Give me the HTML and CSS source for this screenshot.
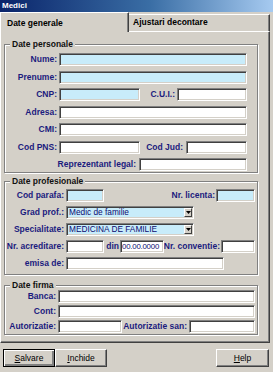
FILE: index.html
```html
<!DOCTYPE html>
<html lang="ro">
<head>
    <meta charset="UTF-8">
    <meta name="viewport" content="width=device-width, initial-scale=1.0">
    <title>Medici</title>
    <link rel="stylesheet" href="styles.css">
</head>
<body>
    <div class="window">
        <div class="titlebar">Medici</div>

        <div class="tabs">
            <div class="tab active">Date generale</div>
            <div class="tab">Ajustari decontare</div>
        </div>

        <div class="panel">
            <fieldset class="group personale">
                <legend>Date personale</legend>
                <div class="rows">
                    <div class="row">
                        <label class="lbl p-lbl">Nume:</label>
                        <div class="field blue p-full"></div>
                    </div>
                    <div class="row">
                        <label class="lbl p-lbl">Prenume:</label>
                        <div class="field blue p-full"></div>
                    </div>
                    <div class="row">
                        <label class="lbl p-lbl">CNP:</label>
                        <div class="field blue p-half"></div>
                        <label class="lbl cui-lbl">C.U.I.:</label>
                        <div class="field cui"></div>
                    </div>
                    <div class="row">
                        <label class="lbl p-lbl">Adresa:</label>
                        <div class="field p-full"></div>
                    </div>
                    <div class="row">
                        <label class="lbl p-lbl">CMI:</label>
                        <div class="field p-full"></div>
                    </div>
                    <div class="row">
                        <label class="lbl p-lbl">Cod PNS:</label>
                        <div class="field p-half"></div>
                        <label class="lbl jud-lbl">Cod Jud:</label>
                        <div class="field jud"></div>
                    </div>
                    <div class="row">
                        <label class="lbl repr-lbl">Reprezentant legal:</label>
                        <div class="field repr"></div>
                    </div>
                </div>
            </fieldset>

            <fieldset class="group profesionale">
                <legend>Date profesionale</legend>
                <div class="rows">
                    <div class="row">
                        <label class="lbl d-lbl">Cod parafa:</label>
                        <div class="field blue short"></div>
                        <label class="lbl lic-lbl">Nr. licenta:</label>
                        <div class="field blue lic"></div>
                    </div>
                    <div class="row">
                        <label class="lbl d-lbl">Grad prof.:</label>
                        <div class="field blue select">
                            <span class="value">Medic de familie</span>
                            <span class="arrow"><svg width="5" height="3" viewBox="0 0 5 3"><polygon points="0,0 5,0 2.5,3" fill="#000"/></svg></span>
                        </div>
                    </div>
                    <div class="row">
                        <label class="lbl d-lbl">Specialitate:</label>
                        <div class="field blue select">
                            <span class="value">MEDICINA DE FAMILIE</span>
                            <span class="arrow"><svg width="5" height="3" viewBox="0 0 5 3"><polygon points="0,0 5,0 2.5,3" fill="#000"/></svg></span>
                        </div>
                    </div>
                    <div class="row">
                        <label class="lbl d-lbl">Nr. acreditare:</label>
                        <div class="field short"></div>
                        <label class="lbl din-lbl">din</label>
                        <div class="field date"><span class="value">00.00.0000</span></div>
                        <label class="lbl conv-lbl">Nr. conventie:</label>
                        <div class="field conv"></div>
                    </div>
                    <div class="row">
                        <label class="lbl d-lbl">emisa de:</label>
                        <div class="field emisa"></div>
                    </div>
                </div>
            </fieldset>

            <fieldset class="group firma">
                <legend>Date firma</legend>
                <div class="rows">
                    <div class="row">
                        <label class="lbl f-lbl">Banca:</label>
                        <div class="field f-full"></div>
                    </div>
                    <div class="row">
                        <label class="lbl f-lbl">Cont:</label>
                        <div class="field f-full"></div>
                    </div>
                    <div class="row">
                        <label class="lbl f-lbl">Autorizatie:</label>
                        <div class="field aut"></div>
                        <label class="lbl san-lbl">Autorizatie san:</label>
                        <div class="field san"></div>
                    </div>
                </div>
            </fieldset>
        </div>

        <div class="buttons">
            <button class="btn default"><u>S</u>alvare</button>
            <button class="btn"><u>I</u>nchide</button>
            <span class="spacer"></span>
            <button class="btn help"><u>H</u>elp</button>
        </div>
    </div>
</body>
</html>
```

FILE: styles.css
```css
:root {
    --face: #d4d0c8;
    --shadow: #808080;
    --dark: #404040;
    --light: #fff;
    --label: #1b1b7e;
    --blue-field: #c8ecfa;
}

* {
    box-sizing: border-box;
}

body {
    margin: 0;
    background-color: var(--face);
    font-family: 'Liberation Sans', Arial, sans-serif;
    font-size: 8.5px;
    color: #000;
}

.window {
    width: 273px;
    height: 372px;
    overflow: hidden;
}

.titlebar {
    height: 12px;
    padding-left: 2px;
    line-height: 12px;
    font-size: 8px;
    font-weight: bold;
    color: #fff;
    background: linear-gradient(90deg, #0a246a 0%, #3a6ea5 55%, #a6caf0 100%);
}

/* Taburi */
.tabs {
    display: flex;
    height: 19px;
}

.tab {
    height: 17px;
    margin-top: 2px;
    padding-left: 4px;
    width: 141px;
    line-height: 15px;
    font-weight: bold;
    border-top: 1px solid var(--light);
    border-right: 1px solid var(--dark);
    box-shadow: inset -1px 0 0 var(--shadow);
}

.tab.active {
    position: relative;
    z-index: 1;
    width: 129px;
    height: 20px;
    margin-top: 0;
    padding-left: 6px;
    line-height: 20px;
    border-left: 1px solid var(--light);
    background-color: var(--face);
}

.panel {
    width: 270px;
    padding: 7px 0 7px 3px;
    border-top: 1px solid var(--light);
    border-left: 1px solid var(--light);
    border-right: 1px solid var(--dark);
    border-bottom: 1px solid var(--dark);
    box-shadow: inset -1px -1px 0 var(--shadow);
}

/* Grupuri */
.group {
    width: 254px;
    min-width: 0;
    margin: 0;
    padding: 0;
    border: 1px solid var(--shadow);
    box-shadow: inset 1px 1px 0 var(--light), 1px 1px 0 var(--light);
}

.group legend {
    margin-left: 5px;
    padding: 0 2px;
    line-height: 10px;
    font-weight: bold;
    color: #111;
    background-color: var(--face);
}

.rows {
    display: flex;
    flex-direction: column;
}

.personale .rows { gap: 4.5px; padding: 4px 0 1px 0; }
.profesionale { margin-top: 3px; }
.profesionale .rows { gap: 4px; padding: 3px 0 4px 0; }
.firma { margin-top: 5px; }
.firma .rows { gap: 2px; padding: 0 0 1px 0; }

.row {
    display: flex;
    align-items: center;
    height: 13px;
}

.lbl {
    display: flex;
    justify-content: flex-end;
    flex-shrink: 0;
    white-space: nowrap;
    font-weight: bold;
    color: var(--label);
    line-height: 13px;
}

.field {
    flex-shrink: 0;
    height: 13px;
    overflow: hidden;
    background-color: #fff;
    border: 1px solid;
    border-color: var(--shadow) var(--light) var(--light) var(--shadow);
    box-shadow: inset 1px 1px 0 var(--dark), inset -1px -1px 0 var(--face);
}

.field.blue {
    background-color: var(--blue-field);
}

.field .value {
    display: block;
    padding-left: 2px;
    line-height: 11px;
    font-size: 8.3px;
    color: #0b0b70;
    white-space: nowrap;
}

/* Date personale */
.p-lbl { width: 52px; margin-right: 2px; }
.p-full { width: 188px; }
.p-half { width: 81px; }
.cui-lbl { width: 35px; margin-right: 2px; }
.cui { width: 70px; }
.jud-lbl { width: 43px; margin-right: 3px; }
.jud { width: 61px; }
.repr-lbl { width: 131px; margin-right: 3px; }
.repr { width: 108px; }

/* Date profesionale */
.d-lbl { width: 59px; margin-right: 2px; }
.short { width: 38px; }
.lic-lbl { width: 111px; margin-right: 1px; }
.lic { width: 39px; }
.din-lbl { width: 15px; margin-right: 1px; }
.date { width: 44px; }
.date .value {
    padding-left: 1px;
    font-size: 7.8px;
    letter-spacing: -0.2px;
}
.conv-lbl { width: 56px; margin-right: 1px; }
.conv { width: 34px; }
.emisa { width: 158px; }

.select {
    display: flex;
    width: 128px;
    justify-content: space-between;
    padding-right: 1px;
}

.select .arrow {
    display: flex;
    align-items: center;
    justify-content: center;
    width: 8px;
    height: 9px;
    margin-top: 1px;
    background-color: var(--face);
    border: 1px solid;
    border-color: var(--light) var(--dark) var(--dark) var(--light);
}

/* Date firma */
.f-lbl { width: 51px; margin-right: 2px; }
.f-full { width: 197px; }
.aut { width: 64px; }
.san-lbl { width: 65px; margin-right: 2px; }
.san { width: 66px; }

/* Butoane */
.buttons {
    display: flex;
    margin-top: 6px;
    padding: 0 4px 0 3px;
}

.spacer {
    flex: 1;
}

.btn {
    width: 52px;
    height: 18px;
    padding: 0;
    font-family: 'Liberation Sans', Arial, sans-serif;
    font-size: 8.5px;
    color: #000;
    background-color: var(--face);
    border: 1px solid;
    border-color: var(--light) var(--dark) var(--dark) var(--light);
    box-shadow: inset -1px -1px 0 var(--shadow);
}

.btn.default {
    border: 1px solid #000;
    box-shadow: inset 1px 1px 0 var(--light), inset -2px -2px 0 var(--shadow);
}

.btn.help {
    width: 53px;
}
```
